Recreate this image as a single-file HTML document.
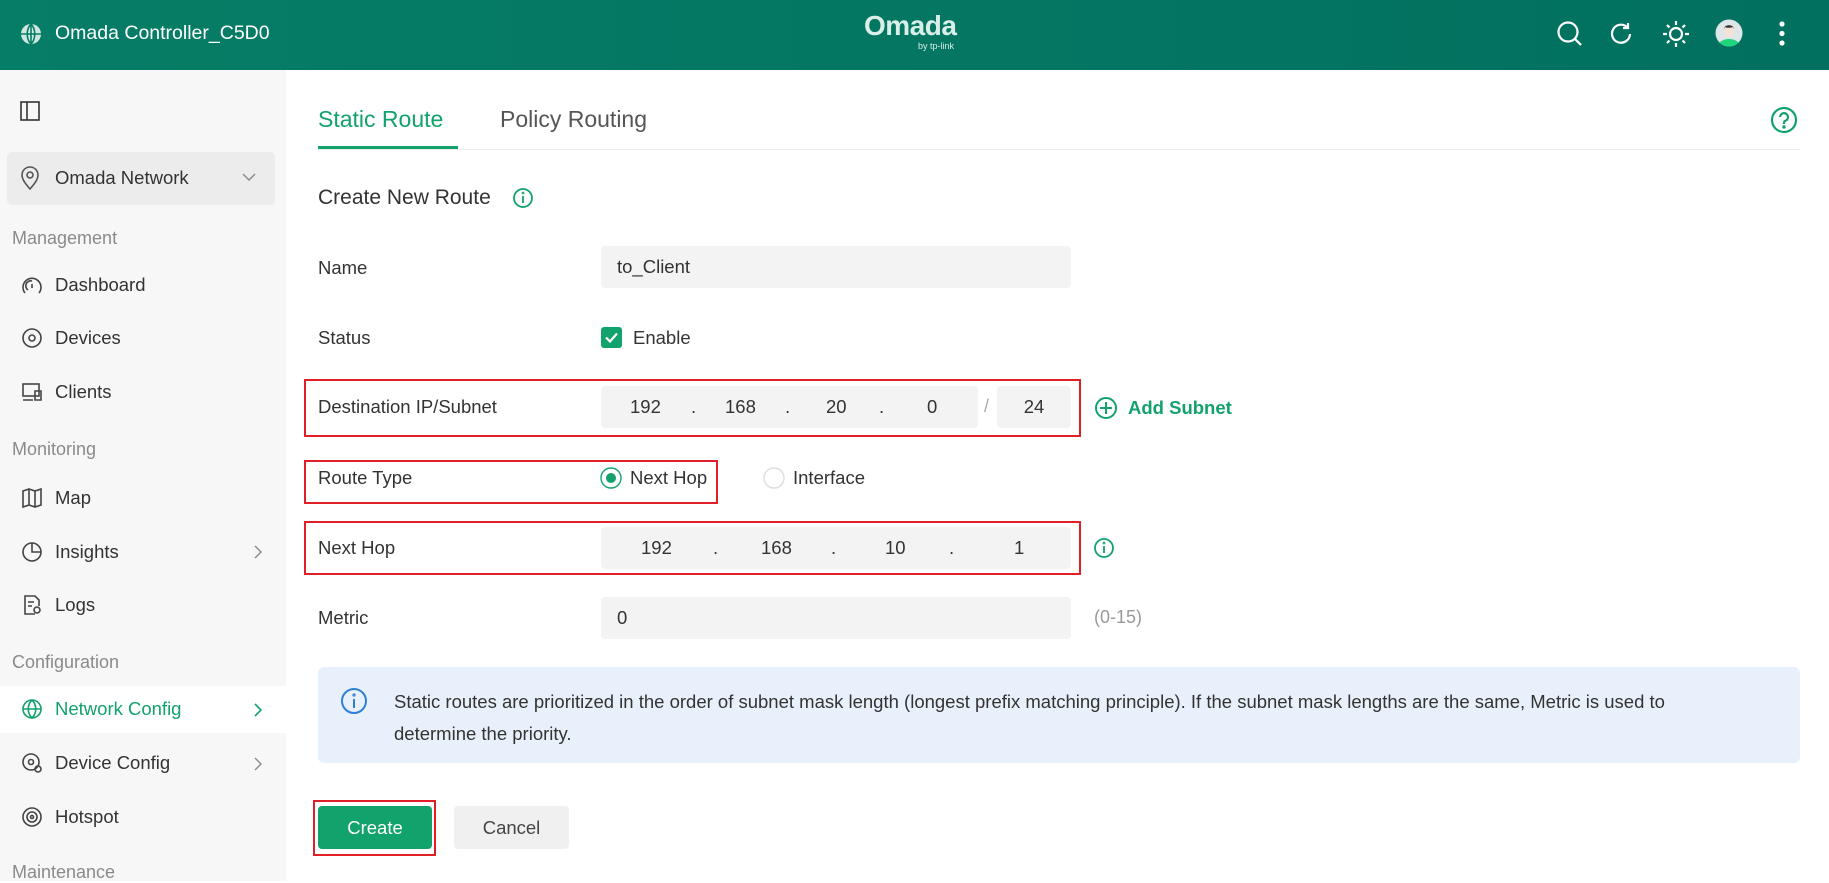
<!DOCTYPE html>
<html><head><meta charset="utf-8"><style>
*{box-sizing:border-box;margin:0;padding:0}
body{width:1829px;height:881px;overflow:hidden;font-family:"Liberation Sans",sans-serif;background:#fff;position:relative;color:#333}
.hdr{position:absolute;left:0;top:0;width:1829px;height:70px;background:linear-gradient(90deg,#067d66,#02705f)}
.abs{position:absolute}
.side{position:absolute;left:0;top:70px;width:286px;height:811px;background:#f7f7f7}
.si{position:absolute;left:21px;font-size:18.5px;color:#333;display:flex;align-items:center}
.si svg{margin-right:12px}
.sec{position:absolute;left:12px;font-size:18px;color:#8a8a8a}
.lbl{position:absolute;left:318px;font-size:18.5px;color:#333}
.inp{position:absolute;background:#f3f3f3;border-radius:4px;height:42px;font-size:18.5px;color:#333;display:flex;align-items:center}
.red{position:absolute;border:2px solid #e01f26}
</style></head><body>
<div class="hdr"></div>
<svg class="abs" style="left:20px;top:23px" width="22" height="22" viewBox="0 0 22 22"><circle cx="11" cy="11" r="10" fill="#cfe9e0"/><path d="M1 11h20M11 1v20M11 1c-5 5-5 15 0 20M11 1c5 5 5 15 0 20" stroke="#067d66" stroke-width="1.6" fill="none"/></svg>
<div class="abs" style="left:55px;top:22px;font-size:19.5px;color:#fff">Omada Controller_C5D0</div>
<div class="abs" style="left:864px;top:10px;font-size:28px;color:#d9efe8;font-weight:bold;letter-spacing:-0.5px">Omada</div>
<div class="abs" style="left:918px;top:41px;font-size:9px;color:#d9efe8">by tp-link</div>
<svg class="abs" style="left:1556px;top:20px" width="28" height="28" viewBox="0 0 28 28" fill="none" stroke="#fff" stroke-width="2.2"><circle cx="12" cy="12" r="9.5"/><path d="M19 19l6 6"/></svg>
<svg class="abs" style="left:1608px;top:20px" width="28" height="28" viewBox="0 0 28 28" fill="none" stroke="#fff" stroke-width="2.2"><path d="M22 14a9 9 0 1 1-3-7"/><path d="M20 3v5h-5"/></svg>
<svg class="abs" style="left:1662px;top:20px" width="28" height="28" viewBox="0 0 28 28" fill="none" stroke="#fff" stroke-width="2.2"><circle cx="14" cy="14" r="6"/><path d="M14 1v4M14 23v4M1 14h4M23 14h4M5 5l2.5 2.5M20.5 20.5L23 23M5 23l2.5-2.5M20.5 7.5L23 5"/></svg>
<svg class="abs" style="left:1715px;top:19px" width="28" height="28" viewBox="0 0 28 28"><defs><clipPath id="c"><circle cx="14" cy="14" r="13.5"/></clipPath></defs><circle cx="14" cy="14" r="13.5" fill="#dfe6ea"/><g clip-path="url(#c)"><ellipse cx="14" cy="29" rx="12" ry="9" fill="#1ed57a"/><ellipse cx="14" cy="12" rx="5" ry="6" fill="#f4e2d6"/><path d="M9 10c0-5 10-5 10 0l-1-2c-3 1-6 1-8 0z" fill="#333"/></g></svg>
<svg class="abs" style="left:1778px;top:20px" width="8" height="28" viewBox="0 0 8 28" fill="#fff"><circle cx="4" cy="4" r="2.6"/><circle cx="4" cy="13.5" r="2.6"/><circle cx="4" cy="23" r="2.6"/></svg>

<div class="side"></div>
<svg class="abs" style="left:20px;top:101px" width="20" height="20" viewBox="0 0 20 20" fill="none" stroke="#333" stroke-width="1.6"><rect x="1" y="1" width="18" height="18"/><path d="M7 1v18"/></svg>
<div class="abs" style="left:7px;top:152px;width:268px;height:53px;background:#ececec;border-radius:5px"></div>
<svg class="abs" style="left:20px;top:165px" width="20" height="26" viewBox="0 0 20 26" fill="none" stroke="#555" stroke-width="1.6"><path d="M10 24C3 16 2 13 2 10a8 8 0 0 1 16 0c0 3-1 6-8 14z"/><circle cx="10" cy="10" r="3"/></svg>
<div class="abs" style="left:55px;top:167px;font-size:18.5px;color:#333">Omada Network</div>
<svg class="abs" style="left:242px;top:172px" width="14" height="10" viewBox="0 0 14 10" fill="none" stroke="#888" stroke-width="1.4"><path d="M1 2l6 6 6-6"/></svg>
<div class="sec" style="top:228px">Management</div>
<div class="si" style="top:274px"><svg width="22" height="22" viewBox="0 0 22 22" fill="none" stroke="#444" stroke-width="1.6"><path d="M4 19A9 9 0 1 1 18 19"/><path d="M7 16a5 5 0 0 1 4-9M11 10v4"/></svg>Dashboard</div>
<div class="si" style="top:327px"><svg width="22" height="22" viewBox="0 0 22 22" fill="none" stroke="#444" stroke-width="1.6"><circle cx="11" cy="11" r="9"/><circle cx="11" cy="11" r="3"/></svg>Devices</div>
<div class="si" style="top:381px"><svg width="22" height="22" viewBox="0 0 22 22" fill="none" stroke="#444" stroke-width="1.6"><rect x="2" y="3" width="16" height="12"/><path d="M2 19h10M14 10h6v9h-6z"/></svg>Clients</div>
<div class="sec" style="top:439px">Monitoring</div>
<div class="si" style="top:487px"><svg width="22" height="22" viewBox="0 0 22 22" fill="none" stroke="#444" stroke-width="1.6"><path d="M2 4l6-2 6 2 6-2v16l-6 2-6-2-6 2zM8 2v16M14 4v16"/></svg>Map</div>
<div class="si" style="top:541px"><svg width="22" height="22" viewBox="0 0 22 22" fill="none" stroke="#444" stroke-width="1.6"><circle cx="11" cy="11" r="9"/><path d="M11 2v9h9"/></svg>Insights</div>
<svg class="abs" style="left:254px;top:545px" width="8" height="14" viewBox="0 0 8 14" fill="none" stroke="#888" stroke-width="1.4"><path d="M1 1l6 6-6 6"/></svg>
<div class="si" style="top:594px"><svg width="22" height="22" viewBox="0 0 22 22" fill="none" stroke="#444" stroke-width="1.6"><path d="M14 20H4V2h10l4 4v6"/><circle cx="16" cy="16" r="3"/><path d="M7 8h6M7 12h4"/></svg>Logs</div>
<div class="sec" style="top:652px">Configuration</div>
<div class="abs" style="left:0;top:686px;width:286px;height:47px;background:#fff"></div>
<div class="si" style="top:698px;color:#12a26b"><svg width="22" height="22" viewBox="0 0 22 22" fill="none" stroke="#12a26b" stroke-width="1.6"><circle cx="11" cy="11" r="9"/><path d="M2 11h18M11 2c-5 5-5 13 0 18M11 2c5 5 5 13 0 18"/></svg>Network Config</div>
<svg class="abs" style="left:254px;top:703px" width="8" height="14" viewBox="0 0 8 14" fill="none" stroke="#12a26b" stroke-width="1.6"><path d="M1 1l6 6-6 6"/></svg>
<div class="si" style="top:752px"><svg width="22" height="22" viewBox="0 0 22 22" fill="none" stroke="#444" stroke-width="1.6"><circle cx="10" cy="10" r="8"/><circle cx="10" cy="10" r="2.5"/><circle cx="17" cy="17" r="3"/></svg>Device Config</div>
<svg class="abs" style="left:254px;top:757px" width="8" height="14" viewBox="0 0 8 14" fill="none" stroke="#888" stroke-width="1.4"><path d="M1 1l6 6-6 6"/></svg>
<div class="si" style="top:806px"><svg width="22" height="22" viewBox="0 0 22 22" fill="none" stroke="#444" stroke-width="1.6"><circle cx="11" cy="11" r="9"/><circle cx="11" cy="11" r="5"/><circle cx="11" cy="11" r="1.5"/></svg>Hotspot</div>
<div class="sec" style="top:862px">Maintenance</div>

<div class="abs" style="left:318px;top:106px;font-size:23px;color:#12a26b">Static Route</div>
<div class="abs" style="left:500px;top:106px;font-size:23px;color:#555">Policy Routing</div>
<div class="abs" style="left:318px;top:149px;width:1482px;height:1px;background:#ececec"></div>
<div class="abs" style="left:318px;top:146px;width:140px;height:3px;background:#12a26b"></div>
<svg class="abs" style="left:1770px;top:106px" width="28" height="28" viewBox="0 0 28 28" fill="none" stroke="#12a26b" stroke-width="2.2"><circle cx="14" cy="14" r="12"/><path d="M10 11a4 4 0 1 1 5 4c-1 .5-1 1-1 3"/><circle cx="14" cy="21" r="0.6" fill="#12a26b"/></svg>

<div class="abs" style="left:318px;top:186px;font-size:21px;color:#333">Create New Route</div>
<svg class="abs" style="left:512px;top:187px" width="22" height="22" viewBox="0 0 22 22" fill="none" stroke="#12a26b" stroke-width="1.8"><circle cx="11" cy="11" r="9"/><path d="M11 9v7"/><circle cx="11" cy="6" r="0.5"/></svg>

<div class="lbl" style="top:257px">Name</div>
<div class="inp" style="left:601px;top:246px;width:470px;padding-left:16px">to_Client</div>
<div class="lbl" style="top:327px">Status</div>
<svg class="abs" style="left:601px;top:327px" width="21" height="21" viewBox="0 0 21 21"><rect width="21" height="21" rx="3" fill="#12a26b"/><path d="M5 10.5l4 4 7-8" stroke="#fff" stroke-width="2.2" fill="none"/></svg>
<div class="abs" style="left:633px;top:327px;font-size:18.5px">Enable</div>

<div class="lbl" style="top:396px">Destination IP/Subnet</div>
<div class="inp" style="left:601px;top:386px;width:377px"><span class="abs" style="left:29px">192</span><span class="abs" style="left:90px">.</span><span class="abs" style="left:124px">168</span><span class="abs" style="left:184px">.</span><span class="abs" style="left:225px">20</span><span class="abs" style="left:278px">.</span><span class="abs" style="left:326px">0</span></div>
<div class="abs" style="left:984px;top:396px;font-size:18px;color:#aaa">/</div>
<div class="inp" style="left:997px;top:386px;width:74px;justify-content:center">24</div>
<div class="red" style="left:304px;top:379px;width:777px;height:58px"></div>
<svg class="abs" style="left:1094px;top:396px" width="24" height="24" viewBox="0 0 24 24" fill="none" stroke="#12a26b" stroke-width="2"><circle cx="12" cy="12" r="10"/><path d="M12 6v12M6 12h12"/></svg>
<div class="abs" style="left:1128px;top:397px;font-size:18.5px;color:#12a26b;font-weight:bold">Add Subnet</div>

<div class="lbl" style="top:467px">Route Type</div>
<svg class="abs" style="left:600px;top:467px" width="22" height="22" viewBox="0 0 22 22"><circle cx="11" cy="11" r="10" fill="#fff" stroke="#12a26b" stroke-width="1.4"/><circle cx="11" cy="11" r="5" fill="#12a26b"/></svg>
<div class="abs" style="left:630px;top:467px;font-size:18.5px">Next Hop</div>
<svg class="abs" style="left:763px;top:467px" width="22" height="22" viewBox="0 0 22 22"><circle cx="11" cy="11" r="10" fill="#fff" stroke="#ddd" stroke-width="1.4"/></svg>
<div class="abs" style="left:793px;top:467px;font-size:18.5px">Interface</div>
<div class="red" style="left:304px;top:460px;width:414px;height:44px"></div>

<div class="lbl" style="top:537px">Next Hop</div>
<div class="inp" style="left:601px;top:527px;width:470px"><span class="abs" style="left:40px">192</span><span class="abs" style="left:112px">.</span><span class="abs" style="left:160px">168</span><span class="abs" style="left:230px">.</span><span class="abs" style="left:284px">10</span><span class="abs" style="left:348px">.</span><span class="abs" style="left:413px">1</span></div>
<div class="red" style="left:304px;top:521px;width:777px;height:54px"></div>
<svg class="abs" style="left:1093px;top:537px" width="22" height="22" viewBox="0 0 22 22" fill="none" stroke="#12a26b" stroke-width="1.8"><circle cx="11" cy="11" r="9"/><path d="M11 9v7"/><circle cx="11" cy="6" r="0.5"/></svg>

<div class="lbl" style="top:607px">Metric</div>
<div class="inp" style="left:601px;top:597px;width:470px;padding-left:16px">0</div>
<div class="abs" style="left:1094px;top:607px;font-size:18px;color:#999">(0-15)</div>

<div class="abs" style="left:318px;top:667px;width:1482px;height:96px;background:#e8f1fb;border-radius:6px"></div>
<svg class="abs" style="left:340px;top:687px" width="28" height="28" viewBox="0 0 28 28" fill="none" stroke="#2f7fd6" stroke-width="2"><circle cx="14" cy="14" r="12"/><path d="M14 12v9"/><circle cx="14" cy="8" r="0.6"/></svg>
<div class="abs" style="left:394px;top:686px;width:1310px;font-size:18.5px;line-height:32px;color:#333">Static routes are prioritized in the order of subnet mask length (longest prefix matching principle). If the subnet mask lengths are the same, Metric is used to determine the priority.</div>

<div class="abs" style="left:318px;top:806px;width:114px;height:43px;background:#12a26b;border-radius:4px;color:#fff;font-size:18.5px;display:flex;align-items:center;justify-content:center">Create</div>
<div class="red" style="left:313px;top:800px;width:123px;height:56px"></div>
<div class="abs" style="left:454px;top:806px;width:115px;height:43px;background:#f0f0f0;border-radius:4px;color:#444;font-size:18.5px;display:flex;align-items:center;justify-content:center">Cancel</div>
</body></html>
